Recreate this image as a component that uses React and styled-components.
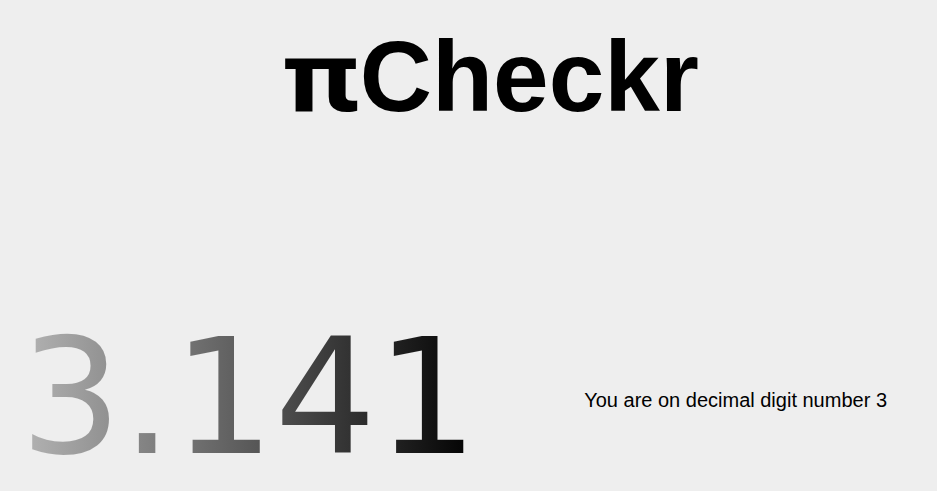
import React from 'react'
import styled, { createGlobalStyle } from 'styled-components'

const GlobalStyle = createGlobalStyle`
    body {
        margin: 0;
        background-color: #eeeeee;
        font-family: 'Liberation Sans', Arial, sans-serif;
    }
`

const Page = styled.div`
    height: 491px;
    display: flex;
    flex-direction: column;
    overflow: hidden;
`

const Title = styled.h1`
    margin: 18px 0 0 0;
    text-align: center;
    font-size: 100px;
    font-weight: bold;
    color: #000;
    padding-left: 44px;
`

const Pi = styled.span`
    display: inline-block;
    font-family: Roboto, 'Liberation Sans', sans-serif;
    font-weight: 700;
    transform: scaleX(1.2);
    transform-origin: left center;
    margin-right: 13px;
`

const Row = styled.div`
    flex: 1;
    display: flex;
    align-items: flex-end;
    justify-content: space-between;
    padding: 0 50px 13px 20px;
`

const Digits = styled.div`
    font-family: 'DejaVu Sans', sans-serif;
    font-size: 160px;
    line-height: 1;
    background: linear-gradient(to right, #b4b4b4, #000000);
    -webkit-background-clip: text;
    background-clip: text;
    color: transparent;
`

const Status = styled.p`
    margin: 0 0 66px 0;
    font-size: 20px;
    color: #000;
`

const App = () => {
    const digits = '3.141'
    const position = digits.length - 2

    return (
        <Page>
            <GlobalStyle />
            <Title><Pi>π</Pi>Checkr</Title>
            <Row>
                <Digits>{digits}</Digits>
                <Status>You are on decimal digit number {position}</Status>
            </Row>
        </Page>
    )
}

export default App
